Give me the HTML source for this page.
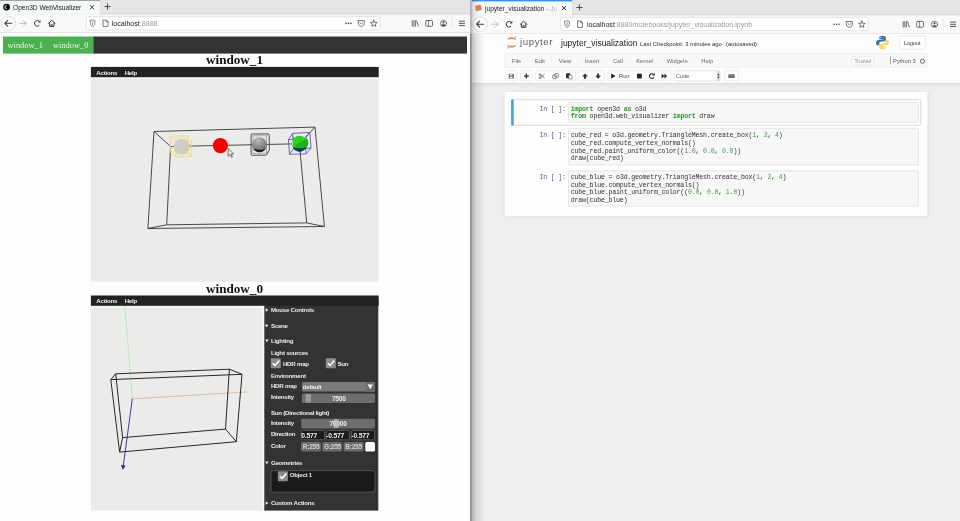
<!DOCTYPE html>
<html>
<head>
<meta charset="utf-8">
<title>Open3D WebVisualizer</title>
<style>
*{box-sizing:border-box;margin:0;padding:0}
html,body{width:960px;height:521px;overflow:hidden;background:#fdfdfd}
body{position:relative;font-family:"Liberation Sans",sans-serif;color:#222}
#root{position:absolute;left:0;top:0;width:960px;height:521px;overflow:hidden;will-change:transform}
.t{position:absolute;white-space:pre}
.b{position:absolute}
svg{position:absolute;overflow:visible}
.r{left:0;top:0;width:960px;height:521px}
.ic{fill:none;stroke-linecap:round;stroke-linejoin:round}
</style>
</head>
<body>
<div id="root">
<svg class="r"><rect x="0.00" y="0.00" width="470.00" height="521.00" fill="#fdfdfd"/></svg>
<svg class="r"><rect x="0.00" y="14.00" width="470.00" height="18.50" fill="#f9f9f9"/></svg>
<svg class="r"><rect x="0.00" y="0.00" width="470.00" height="14.20" fill="#e4e5e5"/></svg>
<svg class="r"><rect x="0.00" y="13.60" width="470.00" height="0.70" fill="#cfd0d0"/></svg>
<svg class="r"><rect x="0.00" y="0.00" width="100.00" height="14.40" fill="#f6f7f7"/></svg>
<svg class="r"><rect x="0.00" y="0.00" width="100.00" height="0.80" fill="#858c96"/></svg>
<svg class="r"><rect x="100.00" y="0.00" width="0.50" height="14.00" fill="#d2d3d3"/></svg>
<svg class="r"><rect x="0.00" y="32.40" width="470.00" height="0.60" fill="#d6d6d6"/></svg>
<div class="t" style="left:13.00px;top:2px;font-family:'Liberation Sans',sans-serif;font-size:6.6px;line-height:12px;color:#1a1a1a;">Open3D WebVisualizer</div>
<svg style="left:0;top:0" width="960" height="521" viewBox="0 0 960 521" fill="none" stroke="#3a3a3c" stroke-width="1">
<circle cx="6.6" cy="7.1" r="3.45" fill="#0c0c0c" stroke="none"/><path d="M7.4 5.2A2.05 2.05 0 1 0 7.4 9A1.75 1.75 0 0 1 7.4 5.2Z" fill="#fff" stroke="none"/>
<path d="M90 5.2L94.1 9.3M94.1 5.2L90 9.3" stroke="#222" stroke-width="0.9"/>
<path d="M107.5 3.5V9.7M104.4 6.6H110.6" stroke="#333" stroke-width="0.85"/>
<circle cx="8.3" cy="23.3" r="7.2" fill="#fbfbfb" stroke="#cdcdcf" stroke-width="0.6"/>
<path class="ic" d="M11.8 23.3H4.9M7.8 20.3L4.8 23.3L7.8 26.3" stroke-width="1.05"/>
<path class="ic" d="M19.8 23.3H26.2M23.3 20.3L26.3 23.3L23.3 26.3" stroke="#b9b9bb" stroke-width="0.9"/>
<path class="ic" d="M38.96 25.78A2.9 2.9 0 1 1 39.3 21.2" stroke-width="1"/>
<path d="M40.5 19.9V22.5H37.9Z" fill="#3a3a3c" stroke="none"/>
<path class="ic" d="M48.6 23.4L51.8 20.2L55 23.4M49.6 22.9V26.4H54V22.9" stroke-width="1"/>
<path class="ic" d="M51.2 26.4V24.4H52.4V26.4" stroke-width="0.7"/>
<rect x="86.3" y="16.75" width="293.8" height="13.25" rx="1.5" fill="#fff" stroke="#d2d2d4" stroke-width="0.6"/>
<path class="ic" d="M90.3 20.5L92.6 19.8L94.9 20.5V23.2C94.9 25 93.8 26 92.6 26.6C91.4 26 90.3 25 90.3 23.2Z" stroke="#5a5a5c" stroke-width="0.7"/>
<path d="M92.6 21.2V25.2" stroke="#8a8a8c" stroke-width="0.9"/>
<path d="M99.4 18.5V28" stroke="#e2e2e4" stroke-width="0.5"/>
<path class="ic" d="M103 20.3V26.5H108V21.8L106.4 20.1H103.2ZM106.3 20.2V21.9H108" stroke="#4a4a4c" stroke-width="0.7"/>
<g fill="#444" stroke="none"><circle cx="346.1" cy="23.4" r="0.8"/><circle cx="348.5" cy="23.4" r="0.8"/><circle cx="350.9" cy="23.4" r="0.8"/></g>
<path class="ic" d="M358.3 20.6H364.3V23.4C364.3 25.4 362.9 26.3 361.3 26.3C359.7 26.3 358.3 25.4 358.3 23.4ZM359.8 22.6L361.3 24L362.8 22.6" stroke-width="0.75" stroke="#4a4a4c"/>
<path class="ic" d="M373.80 20.10L374.71 22.35L377.13 22.52L375.27 24.08L375.86 26.43L373.80 25.15L371.74 26.43L372.33 24.08L370.47 22.52L372.89 22.35Z" stroke-width="0.75" stroke="#4a4a4c"/>
<path class="ic" d="M412.2 20.6V26.2M413.8 20.6V26.2M415.4 20.6V26.2M416.6 20.8L418.4 26.1" stroke-width="0.8" stroke="#4a4a4c"/>
<rect x="425.7" y="20.5" width="6.8" height="5.8" rx="1" class="ic" stroke-width="0.8" stroke="#4a4a4c"/><path d="M428.6 20.5V26.3" class="ic" stroke-width="0.7" stroke="#4a4a4c"/>
<circle cx="443.5" cy="23.4" r="3.1" class="ic" stroke-width="0.7" stroke="#4a4a4c"/><circle cx="443.5" cy="22.4" r="1.1" fill="#4a4a4c" stroke="none"/><path d="M441.3 25.4C441.8 24 445.2 24 445.7 25.4C444.8 26.4 442.2 26.4 441.3 25.4Z" fill="#4a4a4c" stroke="none"/>
<path d="M452.3 17.3V29.2" stroke="#d8d8da" stroke-width="0.5"/>
<path class="ic" d="M459.4 21.2H464.6M459.4 23.4H464.6M459.4 25.6H464.6" stroke-width="0.85" stroke="#3a3a3c"/>
</svg>
<div class="t" style="left:111.80px;top:18px;font-family:'Liberation Sans',sans-serif;font-size:7.1px;line-height:12px;color:#1a1a1a;">localhost<span style="color:#9a9a9a">:8888</span></div>
<svg class="r"><rect x="93.00" y="36.50" width="374.00" height="17.10" fill="#333"/></svg>
<svg class="r"><rect x="3.00" y="36.50" width="90.60" height="17.10" fill="#4caf50"/></svg>
<div class="t" style="left:7.50px;top:40px;font-family:'Liberation Serif',serif;font-size:8.4px;line-height:12px;color:#eef7ee;">window_1</div>
<div class="t" style="left:53.00px;top:40px;font-family:'Liberation Serif',serif;font-size:8.4px;line-height:12px;color:#eef7ee;">window_0</div>
<div class="t" style="left:206.00px;top:54px;font-family:'Liberation Serif',serif;font-size:13.15px;line-height:12px;color:#111;font-weight:bold;">window_1</div>
<svg class="r"><rect x="90.90" y="70.00" width="287.80" height="211.90" fill="#ebebea"/></svg>
<svg class="r"><rect x="90.90" y="76.00" width="287.80" height="2.80" fill="#f4f4f3"/></svg>
<svg class="r"><rect x="90.90" y="66.90" width="287.80" height="10.30" fill="#222221"/></svg>
<div class="t" style="left:96.30px;top:67px;font-family:'Liberation Sans',sans-serif;font-size:6.1px;line-height:12px;color:#f2f2f2;font-weight:bold;letter-spacing:-0.22px">Actions</div>
<div class="t" style="left:124.70px;top:67px;font-family:'Liberation Sans',sans-serif;font-size:6.1px;line-height:12px;color:#f2f2f2;font-weight:bold;letter-spacing:-0.22px">Help</div>
<div class="t" style="left:206.00px;top:283px;font-family:'Liberation Serif',serif;font-size:13.15px;line-height:12px;color:#111;font-weight:bold;">window_0</div>
<svg class="r"><rect x="90.90" y="300.00" width="173.40" height="210.60" fill="#ebebea"/></svg>
<svg class="r"><rect x="90.90" y="304.00" width="173.40" height="3.30" fill="#f4f4f3"/></svg>
<svg class="r"><rect x="262.30" y="305.70" width="2.00" height="204.90" fill="#f8f8f7"/></svg>
<svg class="r"><rect x="264.30" y="300.00" width="114.00" height="210.60" fill="#343332"/></svg>
<svg class="r"><rect x="90.90" y="295.50" width="287.80" height="10.30" fill="#222221"/></svg>
<div class="t" style="left:96.30px;top:295px;font-family:'Liberation Sans',sans-serif;font-size:6.1px;line-height:12px;color:#f2f2f2;font-weight:bold;letter-spacing:-0.22px">Actions</div>
<div class="t" style="left:124.70px;top:295px;font-family:'Liberation Sans',sans-serif;font-size:6.1px;line-height:12px;color:#f2f2f2;font-weight:bold;letter-spacing:-0.22px">Help</div>
<svg style="left:0;top:0" width="960" height="521" viewBox="0 0 960 521" fill="none" stroke="#2a2a2a" stroke-width="0.85" stroke-linejoin="round">
<defs><radialGradient id="gsph" cx="0.4" cy="0.22" r="0.8"><stop offset="0" stop-color="#b8b8b8"/><stop offset="0.6" stop-color="#888888"/><stop offset="1" stop-color="#6a6a6a"/></radialGradient></defs>
<path d="M154 131.5L315 127.1L324.4 226.5L147.9 228.5Z"/>
<path d="M170.6 146.5L299.4 143.75L306.7 222.9L166.7 224.8Z"/>
<path d="M154 131.5L170.6 146.5M315 127.1L299.4 143.75M324.4 226.5L306.7 222.9M147.9 228.5L166.7 224.8"/>
<g stroke="#eedb8a" stroke-width="0.95">
  <path d="M170.4 136.1L187.5 135.9L187.6 151.7L170.2 151.9Z" fill="rgba(246,228,170,0.22)"/>
  <path d="M176.1 141.5L191.9 141.4L191.6 156.6L176.1 156.9Z" fill="rgba(246,228,170,0.15)"/>
  <path d="M170.4 136.1L176.1 141.5M187.5 135.9L191.9 141.4M187.6 151.7L191.6 156.6M170.2 151.9L176.1 156.9"/>
</g>
<circle cx="181.8" cy="146.8" r="8" fill="#cdcdcc" stroke="none"/>
<path d="M185.4 139.7A8 8 0 0 1 185.4 153.9Z" fill="rgba(230,210,130,0.5)" stroke="none"/>
<path d="M175.3 151.5A8 8 0 0 0 188.3 151.5Z" fill="rgba(230,210,130,0.4)" stroke="none"/>
<circle cx="220.4" cy="145.6" r="7.6" fill="#f50000" stroke="none"/>
<g stroke="#3a3a3a" stroke-width="0.9">
  <path d="M252 134L268.2 133.9Q269.2 133.9 269.2 134.9L269.3 150.2L266.8 154.4Q266.4 155.2 265.4 155.2L252.2 155.3Q251.1 155.3 251.1 154.2L251.1 135Q251.1 134 252 134Z"/>
  <path d="M253 135.8L266.4 135.7L266.5 153.3L253 153.4ZM266.4 135.7L269 134.2M266.5 153.3L269.2 150.2" stroke-width="0.5" stroke="#6a6a6a"/>
</g>
<circle cx="259.5" cy="144.7" r="7.5" fill="url(#gsph)" stroke="none"/>
<path d="M253.3 148.9C256.5 149.9 262.5 149.9 265.7 148.9A7.5 7.5 0 0 1 253.3 148.9Z" fill="#1a1a1a" stroke="none"/>
<g stroke="#5454b4" stroke-width="0.85">
  <path d="M288.4 139.6L292.6 133.4L309.8 132.4L311 148.1L306.2 153.9L289.6 154.3Z"/>
  <path d="M288.4 139.6L305 138.6L306.2 153.9M305 138.6L309.8 132.4M292.6 133.4L293.6 148.8L311 148.1M293.6 148.8L289.6 154.3"/>
</g>
<circle cx="299.5" cy="143.6" r="7.8" fill="#2bd41f" stroke="none"/>
<path d="M296.5 144.3L307 138.3A7.8 7.8 0 0 1 305.6 148.6L293 148.4Z" fill="#22b024" stroke="none"/>
<path d="M292.6 147.2C296.5 148.4 302.5 148.4 306.6 146.9A7.8 7.8 0 0 1 292.6 147.2Z" fill="#0c4a58" stroke="none"/>
<path d="M295.6 150.4A7.8 7.8 0 0 0 303.6 150.3C301 151 298 151 295.6 150.4Z" fill="#141414" stroke="none"/>
<path d="M293.4 136.6L293.6 146.4" stroke="#157a2a" stroke-width="0.7"/>
<path d="M291.8 142.2A7.8 7.8 0 0 0 292.3 146.6L293.5 146.4L293.4 138.6A7.8 7.8 0 0 0 291.8 142.2Z" fill="#8fe48a" stroke="none"/>
<path d="M228.1 148.4V156.2L229.9 154.5L231.4 157.4L232.5 156.9L231.1 154H233.6Z" fill="#efefef" stroke="#333" stroke-width="0.65"/>

<path d="M124.8 306L132.3 398.5" stroke="#9fe49f" stroke-width="0.65"/>
<path d="M132.3 398.8L247 392" stroke="#e6a898" stroke-width="0.8"/>
<g stroke="#1c1c1c" stroke-width="0.95"><path d="M110.8 379.6L242 374.3L236.3 441.7L119.6 452.1Z"/>
<path d="M115.7 373.8L229.4 369.2L225.5 429.1L122.6 437.6Z"/>
<path d="M110.8 379.6L115.7 373.8M242 374.3L229.4 369.2M236.3 441.7L225.5 429.1M119.6 452.1L122.6 437.6"/></g>
<path d="M132.3 398.8L123.2 466.5" stroke="#1f2a9c" stroke-width="0.9"/>
<path d="M121.4 465.3L125.2 465.8L122.9 469.4Z" fill="#1f2a9c" stroke="#1f2a9c" stroke-width="0.5"/>

</svg>
<svg style="left:0;top:0" width="960" height="521" viewBox="0 0 960 521" fill="#f0f0f0"><path d="M265.7 308.3L268.5 310L265.7 311.7Z"/><path d="M265.7 323.90000000000003L268.5 325.6L265.7 327.3Z"/><path d="M265.2 339.40000000000003L268.59999999999997 339.40000000000003L266.9 342.20000000000005Z"/><path d="M265.2 461.55L268.59999999999997 461.55L266.9 464.35Z"/><path d="M265.7 501.40000000000003L268.5 503.1L265.7 504.8Z"/></svg>
<div class="t" style="left:270.90px;top:304px;font-family:'Liberation Sans',sans-serif;font-size:6.13px;line-height:12px;color:#ededed;font-weight:bold;letter-spacing:-0.235px">Mouse Controls</div>
<div class="t" style="left:270.90px;top:320px;font-family:'Liberation Sans',sans-serif;font-size:6.13px;line-height:12px;color:#ededed;font-weight:bold;letter-spacing:-0.235px">Scene</div>
<div class="t" style="left:270.90px;top:335px;font-family:'Liberation Sans',sans-serif;font-size:6.13px;line-height:12px;color:#ededed;font-weight:bold;letter-spacing:-0.235px">Lighting</div>
<div class="t" style="left:270.90px;top:347px;font-family:'Liberation Sans',sans-serif;font-size:6.13px;line-height:12px;color:#ededed;font-weight:bold;letter-spacing:-0.235px">Light sources</div>
<svg class="r"><rect x="270.80" y="358.20" width="10.00" height="10.00" rx="1" fill="#8c8c8c"/></svg><svg style="left:270.8px;top:358.2px" width="10" height="10" viewBox="0 0 10 10"><path d="M1.8 5.2L4 7.4L8.4 2.6" fill="none" stroke="#fff" stroke-width="1.5"/></svg>
<div class="t" style="left:282.90px;top:358px;font-family:'Liberation Sans',sans-serif;font-size:6.13px;line-height:12px;color:#ededed;font-weight:bold;letter-spacing:-0.235px">HDR map</div>
<svg class="r"><rect x="325.80" y="358.20" width="10.00" height="10.00" rx="1" fill="#8c8c8c"/></svg><svg style="left:325.8px;top:358.2px" width="10" height="10" viewBox="0 0 10 10"><path d="M1.8 5.2L4 7.4L8.4 2.6" fill="none" stroke="#fff" stroke-width="1.5"/></svg>
<div class="t" style="left:337.50px;top:358px;font-family:'Liberation Sans',sans-serif;font-size:6.13px;line-height:12px;color:#ededed;font-weight:bold;letter-spacing:-0.235px">Sun</div>
<div class="t" style="left:270.90px;top:370px;font-family:'Liberation Sans',sans-serif;font-size:6.13px;line-height:12px;color:#ededed;font-weight:bold;letter-spacing:-0.235px">Environment</div>
<div class="t" style="left:270.90px;top:380px;font-family:'Liberation Sans',sans-serif;font-size:6.13px;line-height:12px;color:#ededed;font-weight:bold;letter-spacing:-0.235px">HDR map</div>
<svg class="r"><rect x="301.90" y="381.90" width="73.10" height="9.70" rx="1.5" fill="#7a7a7a"/></svg>
<div class="b" style="left:365.60px;top:381.90px;width:9.40px;height:9.70px;background:#6c6c6c;border-radius:0 1.5px 1.5px 0"></div>
<svg style="left:0;top:0" width="960" height="521" viewBox="0 0 960 521" fill="#fff"><path d="M367.6 384.6H372.9L370.25 389.2Z"/></svg>
<div class="t" style="left:302.75px;top:381px;font-family:'Liberation Sans',sans-serif;font-size:6.13px;line-height:12px;color:#ededed;font-weight:bold;letter-spacing:-0.235px">default</div>
<div class="t" style="left:270.90px;top:391px;font-family:'Liberation Sans',sans-serif;font-size:6.13px;line-height:12px;color:#ededed;font-weight:bold;letter-spacing:-0.235px">Intensity</div>
<svg class="r"><rect x="301.90" y="393.40" width="73.10" height="9.70" rx="1.5" fill="#6e6e6e"/></svg>
<svg class="r"><rect x="305.60" y="393.90" width="5.40" height="8.70" rx="1" fill="#9a9a9a"/></svg>
<div class="t" style="left:331.90px;top:393px;font-family:'Liberation Sans',sans-serif;font-size:6.67px;line-height:12px;color:#ededed;font-weight:bold;letter-spacing:-0.256px">7500</div>
<div class="t" style="left:270.90px;top:407px;font-family:'Liberation Sans',sans-serif;font-size:6.13px;line-height:12px;color:#ededed;font-weight:bold;letter-spacing:-0.235px">Sun (Directional light)</div>
<div class="t" style="left:270.90px;top:417px;font-family:'Liberation Sans',sans-serif;font-size:6.13px;line-height:12px;color:#ededed;font-weight:bold;letter-spacing:-0.235px">Intensity</div>
<svg class="r"><rect x="301.25" y="418.75" width="73.75" height="9.75" rx="1.5" fill="#6e6e6e"/></svg>
<div class="t" style="left:329.40px;top:418px;font-family:'Liberation Sans',sans-serif;font-size:6.67px;line-height:12px;color:#ededed;font-weight:bold;letter-spacing:-0.256px">70000</div>
<svg class="r"><rect x="333.75" y="419.30" width="4.75" height="8.70" rx="1" fill="rgba(200,200,200,0.75)"/></svg>
<div class="t" style="left:270.90px;top:428px;font-family:'Liberation Sans',sans-serif;font-size:6.13px;line-height:12px;color:#ededed;font-weight:bold;letter-spacing:-0.235px">Direction</div>
<svg class="r"><rect x="301.45" y="430.45" width="23.10" height="9.35" rx="1" fill="#1a1a1a" stroke="#5c5c5c" stroke-width="0.9"/></svg>
<div class="t" style="left:301.30px;top:430px;font-family:'Liberation Sans',sans-serif;font-size:6.77px;line-height:12px;color:#ededed;font-weight:bold;letter-spacing:-0.260px">0.577</div>
<svg class="r"><rect x="326.45" y="430.45" width="22.85" height="9.35" rx="1" fill="#1a1a1a" stroke="#5c5c5c" stroke-width="0.9"/></svg>
<div class="t" style="left:326.30px;top:430px;font-family:'Liberation Sans',sans-serif;font-size:6.77px;line-height:12px;color:#ededed;font-weight:bold;letter-spacing:-0.260px">-0.577</div>
<svg class="r"><rect x="351.70" y="430.45" width="22.85" height="9.35" rx="1" fill="#1a1a1a" stroke="#5c5c5c" stroke-width="0.9"/></svg>
<div class="t" style="left:351.55px;top:430px;font-family:'Liberation Sans',sans-serif;font-size:6.77px;line-height:12px;color:#ededed;font-weight:bold;letter-spacing:-0.260px">-0.577</div>
<div class="t" style="left:270.90px;top:440px;font-family:'Liberation Sans',sans-serif;font-size:6.13px;line-height:12px;color:#ededed;font-weight:bold;letter-spacing:-0.235px">Color</div>
<svg class="r"><rect x="301.00" y="442.10" width="19.90" height="9.50" rx="1.5" fill="#6b6b6b"/></svg>
<div class="t" style="left:302.80px;top:441px;font-family:'Liberation Sans',sans-serif;font-size:6.56px;line-height:12px;color:#d4d4d4;font-weight:bold;letter-spacing:-0.252px">R:255</div>
<svg class="r"><rect x="322.25" y="442.10" width="19.65" height="9.50" rx="1.5" fill="#6b6b6b"/></svg>
<div class="t" style="left:324.05px;top:441px;font-family:'Liberation Sans',sans-serif;font-size:6.56px;line-height:12px;color:#d4d4d4;font-weight:bold;letter-spacing:-0.252px">G:255</div>
<svg class="r"><rect x="343.50" y="442.10" width="20.00" height="9.50" rx="1.5" fill="#6b6b6b"/></svg>
<div class="t" style="left:345.30px;top:441px;font-family:'Liberation Sans',sans-serif;font-size:6.56px;line-height:12px;color:#d4d4d4;font-weight:bold;letter-spacing:-0.252px">B:255</div>
<svg class="r"><rect x="365.25" y="442.10" width="9.75" height="9.50" rx="1.5" fill="#fdfdfd"/></svg>
<div class="t" style="left:270.90px;top:457px;font-family:'Liberation Sans',sans-serif;font-size:6.13px;line-height:12px;color:#ededed;font-weight:bold;letter-spacing:-0.235px">Geometries</div>
<svg class="r"><rect x="271.00" y="470.65" width="103.85" height="21.45" rx="2" fill="#1b1b1a" stroke="#5a5a5a" stroke-width="0.8"/></svg>
<svg class="r"><rect x="277.90" y="471.25" width="10.00" height="10.00" rx="1" fill="#8c8c8c"/></svg><svg style="left:277.9px;top:471.25px" width="10" height="10" viewBox="0 0 10 10"><path d="M1.8 5.2L4 7.4L8.4 2.6" fill="none" stroke="#fff" stroke-width="1.5"/></svg>
<div class="t" style="left:289.75px;top:469px;font-family:'Liberation Sans',sans-serif;font-size:6.13px;line-height:12px;color:#ededed;font-weight:bold;letter-spacing:-0.235px">Object 1</div>
<div class="t" style="left:270.90px;top:497px;font-family:'Liberation Sans',sans-serif;font-size:6.13px;line-height:12px;color:#ededed;font-weight:bold;letter-spacing:-0.235px">Custom Actions</div>
<svg class="r"><rect x="472.00" y="0.00" width="488.00" height="521.00" fill="#fdfdfd"/></svg>
<svg class="r"><rect x="472.00" y="14.50" width="488.00" height="18.80" fill="#f9f9f9"/></svg>
<svg class="r"><rect x="472.00" y="0.00" width="488.00" height="15.00" fill="#e4e5e5"/></svg>
<svg class="r"><rect x="472.00" y="14.40" width="488.00" height="0.70" fill="#cfd0d0"/></svg>
<svg class="r"><rect x="472.00" y="0.00" width="100.00" height="15.20" fill="#f6f7f7"/></svg>
<svg class="r"><rect x="472.00" y="0.00" width="100.00" height="1.40" fill="#3393ea"/></svg>
<svg class="r"><rect x="572.00" y="0.00" width="0.50" height="15.00" fill="#d2d3d3"/></svg>
<svg class="r"><rect x="472.00" y="33.20" width="488.00" height="0.60" fill="#d6d6d6"/></svg>
<div class="t" style="left:485.00px;top:3px;font-family:'Liberation Sans',sans-serif;font-size:6.6px;line-height:12px;color:#1a1a1a;width:74.5px;overflow:hidden;-webkit-mask-image:linear-gradient(90deg,#000 76%,transparent 99%);">jupyter_visualization - Ju</div>
<svg style="left:0;top:0" width="960" height="521" viewBox="0 0 960 521" fill="none" stroke="#3a3a3c" stroke-width="1">
<path d="M475.6 6L480.6 5L481.3 9.6L476.2 10.9Z" fill="#d9825a" stroke="#d9825a" stroke-width="0.8" stroke-linejoin="round"/>
<path d="M562 6L566.1 10.1M566.1 6L562 10.1" stroke="#222" stroke-width="0.9"/>
<path d="M579.4 4.4V10.6M576.3 7.5H582.5" stroke="#333" stroke-width="0.85"/>
<circle cx="480.1" cy="24.2" r="7.2" fill="#fbfbfb" stroke="#cdcdcf" stroke-width="0.6"/>
<path class="ic" d="M483.6 24.2H476.7M479.6 21.2L476.6 24.2L479.6 27.2" stroke-width="1.05"/>
<path class="ic" d="M491.6 24.2H498.0M495.1 21.2L498.1 24.2L495.1 27.2" stroke="#b9b9bb" stroke-width="0.9"/>
<path class="ic" d="M510.76 26.68A2.9 2.9 0 1 1 511.1 22.099999999999998" stroke-width="1"/>
<path d="M512.3 20.799999999999997V23.4H509.7Z" fill="#3a3a3c" stroke="none"/>
<path class="ic" d="M520.4 24.299999999999997L523.6 21.099999999999998L526.8 24.299999999999997M521.4 23.799999999999997V27.299999999999997H525.8V23.799999999999997" stroke-width="1"/>
<path class="ic" d="M523.0 27.299999999999997V25.299999999999997H524.2V27.299999999999997" stroke-width="0.7"/>
<rect x="560.6" y="17.3" width="307.5" height="13.25" rx="1.5" fill="#fff" stroke="#d2d2d4" stroke-width="0.6"/>
<path class="ic" d="M564.8 21.4L567.1 20.7L569.4 21.4V24.099999999999998C569.4 25.9 568.3 26.9 567.1 27.5C565.9 26.9 564.8 25.9 564.8 24.099999999999998Z" stroke="#5a5a5c" stroke-width="0.7"/>
<path d="M567.1 22.099999999999998V26.099999999999998" stroke="#8a8a8c" stroke-width="0.9"/>
<path d="M573.9 19.4V28.9" stroke="#e2e2e4" stroke-width="0.5"/>
<path class="ic" d="M577.5 21.2V27.4H582.5V22.7L580.9 21.0H577.7ZM580.8 21.099999999999998V22.799999999999997H582.5" stroke="#4a4a4c" stroke-width="0.7"/>
<g fill="#444" stroke="none"><circle cx="834.2" cy="24.299999999999997" r="0.8"/><circle cx="836.6" cy="24.299999999999997" r="0.8"/><circle cx="839.0" cy="24.299999999999997" r="0.8"/></g>
<path class="ic" d="M846.4000000000001 21.5H852.4000000000001V24.299999999999997C852.4000000000001 26.299999999999997 851.0 27.2 849.4000000000001 27.2C847.8 27.2 846.4000000000001 26.299999999999997 846.4000000000001 24.299999999999997ZM847.9000000000001 23.5L849.4000000000001 24.9L850.9000000000001 23.5" stroke-width="0.75" stroke="#4a4a4c"/>
<path class="ic" d="M861.90 21.00L862.81 23.25L865.23 23.42L863.37 24.98L863.96 27.33L861.90 26.05L859.84 27.33L860.43 24.98L858.57 23.42L860.99 23.25Z" stroke-width="0.75" stroke="#4a4a4c"/>
<path class="ic" d="M903.2 21.5V27.099999999999998M904.8 21.5V27.099999999999998M906.4 21.5V27.099999999999998M907.6 21.7L909.4 27.0" stroke-width="0.8" stroke="#4a4a4c"/>
<rect x="916.7" y="21.4" width="6.8" height="5.8" rx="1" class="ic" stroke-width="0.8" stroke="#4a4a4c"/><path d="M919.6 21.4V27.2" class="ic" stroke-width="0.7" stroke="#4a4a4c"/>
<circle cx="934.5" cy="24.299999999999997" r="3.1" class="ic" stroke-width="0.7" stroke="#4a4a4c"/><circle cx="934.5" cy="23.299999999999997" r="1.1" fill="#4a4a4c" stroke="none"/><path d="M932.3 26.299999999999997C932.8 24.9 936.2 24.9 936.7 26.299999999999997C935.8 27.299999999999997 933.2 27.299999999999997 932.3 26.299999999999997Z" fill="#4a4a4c" stroke="none"/>
<path d="M943.3 18.2V30.099999999999998" stroke="#d8d8da" stroke-width="0.5"/>
<path class="ic" d="M950.4 22.099999999999998H955.6M950.4 24.299999999999997H955.6M950.4 26.5H955.6" stroke-width="0.85" stroke="#3a3a3c"/>
</svg>
<div class="t" style="left:586.90px;top:19px;font-family:'Liberation Sans',sans-serif;font-size:7.1px;line-height:12px;color:#1a1a1a;">localhost<span style="color:#9a9a9a">:8889/notebooks/jupyter_visualization.ipynb</span></div>
<svg class="r"><rect x="472.00" y="33.80" width="488.00" height="49.80" fill="#fdfdfd"/></svg>
<svg class="r"><rect x="472.00" y="83.30" width="488.00" height="437.70" fill="#eeeeee"/></svg>
<div class="b" style="left:472.00px;top:83.30px;width:488.00px;height:5.20px;background:linear-gradient(180deg,#d9d9d9,#e6e6e6 30%,#eeeeee 100%)"></div>
<svg style="left:0;top:0" width="960" height="521" viewBox="0 0 960 521" fill="none" stroke="#3a3a3c" stroke-width="1">
<path d="M507.5 39.6C509.8 36.9 513.8 36.9 516 39.6C513.6 38.3 509.9 38.3 507.5 39.6Z" fill="#e8774a" stroke="#e8774a" stroke-width="0.5"/>
<path d="M507.5 45.2C509.8 47.9 513.8 47.9 516 45.2C513.6 46.5 509.9 46.5 507.5 45.2Z" fill="#e8774a" stroke="#e8774a" stroke-width="0.5"/>
<circle cx="515.5" cy="37.1" r="0.6" fill="#777" stroke="none"/><circle cx="508.2" cy="47.8" r="0.7" fill="#777" stroke="none"/><circle cx="507.8" cy="37.7" r="0.4" fill="#888" stroke="none"/>
</svg>
<div class="t" style="left:520.00px;top:36px;font-family:'Liberation Sans',sans-serif;font-size:9.6px;line-height:12px;color:#5a5a5a;letter-spacing:0.62px">jupyter</div>
<div class="t" style="left:561.00px;top:37px;font-family:'Liberation Sans',sans-serif;font-size:8.5px;line-height:12px;color:#1a1a1a;">jupyter_visualization</div>
<div class="t" style="left:640.10px;top:38px;font-family:'Liberation Sans',sans-serif;font-size:5.83px;line-height:12px;color:#2a2a2a;">Last Checkpoint: 3 minutes ago</div>
<div class="t" style="left:726.10px;top:38px;font-family:'Liberation Sans',sans-serif;font-size:5.83px;line-height:12px;color:#2a2a2a;">(autosaved)</div>
<svg style="left:0;top:0" width="960" height="521" viewBox="0 0 960 521" fill="none" stroke="#3a3a3c" stroke-width="1">
<g stroke="none">
<path d="M882.3 35.8C879.6 35.8 879.3 36.9 879.3 37.9V39.4H882.5V40H878.2C876.8 40 876 41.2 876 42.7C876 44.3 876.8 45.3 878 45.3H879.3V43.4C879.3 42.2 880.3 41.4 881.4 41.4H884.2C885.2 41.4 885.9 40.7 885.9 39.7V37.9C885.9 36.7 884.9 35.8 882.3 35.8Z" fill="#3b77a8"/>
<path d="M882.6 49.3C885.3 49.3 885.6 48.2 885.6 47.2V45.7H882.4V45.1H886.7C888.1 45.1 888.9 43.9 888.9 42.4C888.9 40.8 888.1 39.8 886.9 39.8H885.6V41.7C885.6 42.9 884.6 43.7 883.5 43.7H880.7C879.7 43.7 879 44.4 879 45.4V47.2C879 48.4 880 49.3 882.6 49.3Z" fill="#f6dc66"/>
<circle cx="880.8" cy="37.5" r="0.55" fill="#fff"/><circle cx="884.1" cy="47.6" r="0.55" fill="#fff"/></g>
</svg>
<svg class="r"><rect x="899.65" y="36.25" width="25.70" height="12.90" rx="1.5" fill="#fff" stroke="#d2d2d2" stroke-width="0.5"/></svg>
<div class="t" style="left:904.00px;top:37px;font-family:'Liberation Sans',sans-serif;font-size:5.43px;line-height:12px;color:#333;">Logout</div>
<svg class="r"><rect x="504.85" y="53.45" width="422.40" height="13.70" rx="1" fill="#f8f8f8" stroke="#e4e4e4" stroke-width="0.5"/></svg>
<div class="t" style="left:512.00px;top:55px;font-family:'Liberation Sans',sans-serif;font-size:5.75px;line-height:12px;color:#666;">File</div>
<div class="t" style="left:535.00px;top:55px;font-family:'Liberation Sans',sans-serif;font-size:5.75px;line-height:12px;color:#666;">Edit</div>
<div class="t" style="left:558.75px;top:55px;font-family:'Liberation Sans',sans-serif;font-size:5.75px;line-height:12px;color:#666;">View</div>
<div class="t" style="left:585.00px;top:55px;font-family:'Liberation Sans',sans-serif;font-size:5.75px;line-height:12px;color:#666;">Insert</div>
<div class="t" style="left:613.00px;top:55px;font-family:'Liberation Sans',sans-serif;font-size:5.75px;line-height:12px;color:#666;">Cell</div>
<div class="t" style="left:636.25px;top:55px;font-family:'Liberation Sans',sans-serif;font-size:5.75px;line-height:12px;color:#666;">Kernel</div>
<div class="t" style="left:666.75px;top:55px;font-family:'Liberation Sans',sans-serif;font-size:5.75px;line-height:12px;color:#666;">Widgets</div>
<div class="t" style="left:701.25px;top:55px;font-family:'Liberation Sans',sans-serif;font-size:5.75px;line-height:12px;color:#666;">Help</div>
<svg class="r"><rect x="851.75" y="56.75" width="22.00" height="8.30" rx="1" fill="#fdfdfd" stroke="#d9d9d9" stroke-width="0.5"/></svg>
<div class="t" style="left:854.40px;top:55px;font-family:'Liberation Sans',sans-serif;font-size:5.03px;line-height:12px;color:#8c8c8c;">Trusted</div>
<svg class="r"><rect x="890.10" y="56.40" width="0.60" height="8.20" fill="#777"/></svg>
<div class="t" style="left:893.10px;top:55px;font-family:'Liberation Sans',sans-serif;font-size:5.7px;line-height:12px;color:#555;">Python 3</div>
<svg style="left:0;top:0" width="960" height="521" viewBox="0 0 960 521" fill="none" stroke="#3a3a3c" stroke-width="1"><circle cx="922.5" cy="61.2" r="2.1" stroke="#444" stroke-width="0.8"/></svg>
<svg class="r"><rect x="505.85" y="70.85" width="11.15" height="10.10" rx="1.5" fill="#fff" stroke="#dadada" stroke-width="0.5"/></svg>
<svg class="r"><rect x="520.50" y="70.85" width="11.50" height="10.10" rx="1.5" fill="#fff" stroke="#dadada" stroke-width="0.5"/></svg>
<svg class="r"><rect x="535.85" y="70.85" width="39.50" height="10.10" rx="1.5" fill="#fff" stroke="#dadada" stroke-width="0.5"/></svg>
<svg class="r"><rect x="578.35" y="70.85" width="26.15" height="10.10" rx="1.5" fill="#fff" stroke="#dadada" stroke-width="0.5"/></svg>
<svg class="r"><rect x="607.75" y="70.85" width="63.10" height="10.10" rx="1.5" fill="#fff" stroke="#dadada" stroke-width="0.5"/></svg>
<svg class="r"><rect x="724.75" y="70.85" width="13.60" height="10.10" rx="1.5" fill="#fff" stroke="#dadada" stroke-width="0.5"/></svg>
<svg class="r"><rect x="548.70" y="70.60" width="0.60" height="10.60" fill="#ececec"/></svg>
<svg class="r"><rect x="562.20" y="70.60" width="0.60" height="10.60" fill="#ececec"/></svg>
<svg class="r"><rect x="591.20" y="70.60" width="0.60" height="10.60" fill="#ececec"/></svg>
<svg class="r"><rect x="632.00" y="70.60" width="0.60" height="10.60" fill="#ececec"/></svg>
<svg class="r"><rect x="645.30" y="70.60" width="0.60" height="10.60" fill="#ececec"/></svg>
<svg class="r"><rect x="658.30" y="70.60" width="0.60" height="10.60" fill="#ececec"/></svg>
<svg class="r"><rect x="674.00" y="70.85" width="46.05" height="10.10" rx="1.5" fill="#fff" stroke="#cccccc" stroke-width="0.5"/></svg>
<div class="t" style="left:675.80px;top:70px;font-family:'Liberation Sans',sans-serif;font-size:5.6px;line-height:12px;color:#555;">Code</div>
<div class="t" style="left:619.00px;top:70px;font-family:'Liberation Sans',sans-serif;font-size:5.75px;line-height:12px;color:#444;">Run</div>
<svg style="left:0;top:0" width="960" height="521" viewBox="0 0 960 521" fill="#333" stroke="none">
<path d="M508.7 73.7H513L513.9 74.6V78.8H508.7ZM509.7 74.2V75.5H512.3V74.2ZM509.9 76.7V78.3H512.6V76.7Z" fill="#6e6e6e" fill-rule="evenodd"/>
<path d="M525.7 73.6H527.1V75.4H528.9V76.8H527.1V78.6H525.7V76.8H523.9V75.4H525.7Z"/>
<g fill="none" stroke="#555" stroke-width="0.75"><circle cx="540" cy="74.6" r="0.9"/><circle cx="540" cy="77.8" r="0.9"/><path d="M540.8 75.1L544.6 78.2M540.8 77.3L544.6 74.2"/></g>
<g fill="none" stroke="#555" stroke-width="0.7"><rect x="552.7" y="75" width="3.6" height="3.7" rx="0.9"/><rect x="554.8" y="73.5" width="3.6" height="3.7" rx="0.9"/></g>
<path d="M566.1 73.3H570.2V78.2H566.1Z" fill="#2a2a2a"/><path d="M568.7 75.1H571L572.1 76.2V79H568.7Z" fill="#fff" stroke="#333" stroke-width="0.5"/>
<path d="M585 73.4L588 76.4H586V78.8H584V76.4H582Z"/>
<path d="M598.1 78.8L601.1 75.8H599.1V73.4H597.1V75.8H595.1Z"/>
<path d="M611.2 73.4L615.6 76.1L611.2 78.8Z" fill="#222"/>
<rect x="637" y="73.7" width="4.8" height="4.8" fill="#222"/>
<path d="M653.9 77.3A2.4 2.4 0 1 1 653.4 74.3" fill="none" stroke="#222" stroke-width="1.05"/><path d="M654.8 72.9V75.6H652.1Z" fill="#222"/>
<path d="M661.6 73.7L664.4 76.1L661.6 78.5ZM664.4 73.7L667.2 76.1L664.4 78.5Z" fill="#222"/>
<path d="M716.6 70.9H720V80.9H716.6Z" fill="#dcdcdc"/><path d="M717.3 75.2L718.4 73.6L719.5 75.2ZM717.3 76.8L718.4 78.4L719.5 76.8Z" fill="#222"/>
<rect x="728.4" y="74.3" width="6.2" height="3.7" rx="0.4" fill="#555"/><path d="M729.2 75.1H733.8M729.2 76H733.8M730 77.1H733" stroke="#ddd" stroke-width="0.35" fill="none"/>

</svg>
<div class="b" style="left:505.00px;top:92.50px;width:422.00px;height:123.50px;background:#fefefe;box-shadow:0 0 3px 0.5px rgba(87,87,87,0.25)"></div>
<svg class="r"><rect x="504.60" y="92.10" width="423.00" height="124.30" fill="#fefefe"/></svg>
<svg class="r"><rect x="511.55" y="99.65" width="409.20" height="25.60" rx="1" fill="#fefefe" stroke="#b4b4b4" stroke-width="0.5"/></svg>
<svg class="r"><rect x="511.20" y="99.40" width="2.50" height="26.10" fill="#4e9ad6"/></svg>
<svg class="r"><rect x="568.45" y="102.55" width="350.00" height="19.90" rx="1" fill="#f7f7f7" stroke="#d2d2d2" stroke-width="0.5"/></svg>
<svg class="r"><rect x="568.45" y="128.35" width="350.00" height="36.60" rx="1" fill="#f7f7f7" stroke="#d2d2d2" stroke-width="0.5"/></svg>
<svg class="r"><rect x="568.45" y="170.85" width="350.00" height="35.30" rx="1" fill="#f7f7f7" stroke="#d2d2d2" stroke-width="0.5"/></svg>
<div class="t" style="left:539.40px;top:104px;font-family:'Liberation Mono',monospace;font-size:6.6px;line-height:12px;color:#4a58a8;letter-spacing:-0.175px">In [ ]:</div>
<div class="t" style="left:570.70px;top:104px;font-family:'Liberation Mono',monospace;font-size:6.6px;line-height:12px;color:#333;letter-spacing:-0.175px"><b style="color:#2a942a">import</b> open3d <b style="color:#2a942a">as</b> o3d</div>
<div class="t" style="left:570.70px;top:111px;font-family:'Liberation Mono',monospace;font-size:6.6px;line-height:12px;color:#333;letter-spacing:-0.175px"><b style="color:#2a942a">from</b> open3d.web_visualizer <b style="color:#2a942a">import</b> draw</div>
<div class="t" style="left:539.40px;top:130px;font-family:'Liberation Mono',monospace;font-size:6.6px;line-height:12px;color:#4a58a8;letter-spacing:-0.175px">In [ ]:</div>
<div class="t" style="left:570.70px;top:130px;font-family:'Liberation Mono',monospace;font-size:6.6px;line-height:12px;color:#333;letter-spacing:-0.175px">cube_red <b style="color:#8074d4">=</b> o3d.geometry.TriangleMesh.create_box(<span style="color:#3f9a3f">1</span>, <span style="color:#3f9a3f">2</span>, <span style="color:#3f9a3f">4</span>)</div>
<div class="t" style="left:570.70px;top:138px;font-family:'Liberation Mono',monospace;font-size:6.6px;line-height:12px;color:#333;letter-spacing:-0.175px">cube_red.compute_vertex_normals()</div>
<div class="t" style="left:570.70px;top:146px;font-family:'Liberation Mono',monospace;font-size:6.6px;line-height:12px;color:#333;letter-spacing:-0.175px">cube_red.paint_uniform_color((<span style="color:#3f9a3f">1.0</span>, <span style="color:#3f9a3f">0.0</span>, <span style="color:#3f9a3f">0.0</span>))</div>
<div class="t" style="left:570.70px;top:153px;font-family:'Liberation Mono',monospace;font-size:6.6px;line-height:12px;color:#333;letter-spacing:-0.175px">draw(cube_red)</div>
<div class="t" style="left:539.40px;top:172px;font-family:'Liberation Mono',monospace;font-size:6.6px;line-height:12px;color:#4a58a8;letter-spacing:-0.175px">In [ ]:</div>
<div class="t" style="left:570.70px;top:172px;font-family:'Liberation Mono',monospace;font-size:6.6px;line-height:12px;color:#333;letter-spacing:-0.175px">cube_blue <b style="color:#8074d4">=</b> o3d.geometry.TriangleMesh.create_box(<span style="color:#3f9a3f">1</span>, <span style="color:#3f9a3f">2</span>, <span style="color:#3f9a3f">4</span>)</div>
<div class="t" style="left:570.70px;top:180px;font-family:'Liberation Mono',monospace;font-size:6.6px;line-height:12px;color:#333;letter-spacing:-0.175px">cube_blue.compute_vertex_normals()</div>
<div class="t" style="left:570.70px;top:187px;font-family:'Liberation Mono',monospace;font-size:6.6px;line-height:12px;color:#333;letter-spacing:-0.175px">cube_blue.paint_uniform_color((<span style="color:#3f9a3f">0.0</span>, <span style="color:#3f9a3f">0.0</span>, <span style="color:#3f9a3f">1.0</span>))</div>
<div class="t" style="left:570.70px;top:195px;font-family:'Liberation Mono',monospace;font-size:6.6px;line-height:12px;color:#333;letter-spacing:-0.175px">draw(cube_blue)</div>
<div class="b" style="left:472.00px;top:34.00px;width:13.00px;height:487.00px;background:linear-gradient(90deg,rgba(0,0,0,0.24),rgba(0,0,0,0.1) 35%,rgba(0,0,0,0) 100%)"></div>
<div class="b" style="left:472.00px;top:0.00px;width:8.00px;height:34.00px;background:linear-gradient(90deg,rgba(0,0,0,0.16),rgba(0,0,0,0.05) 40%,rgba(0,0,0,0) 100%)"></div>
<svg class="r"><rect x="470.00" y="0.00" width="2.00" height="34.00" fill="#b9b9b9"/></svg>
<div class="b" style="left:470.00px;top:34.00px;width:2.00px;height:487.00px;background:linear-gradient(90deg,#8a8a8a,#a2a2a2)"></div>
</div>
</body>
</html>
